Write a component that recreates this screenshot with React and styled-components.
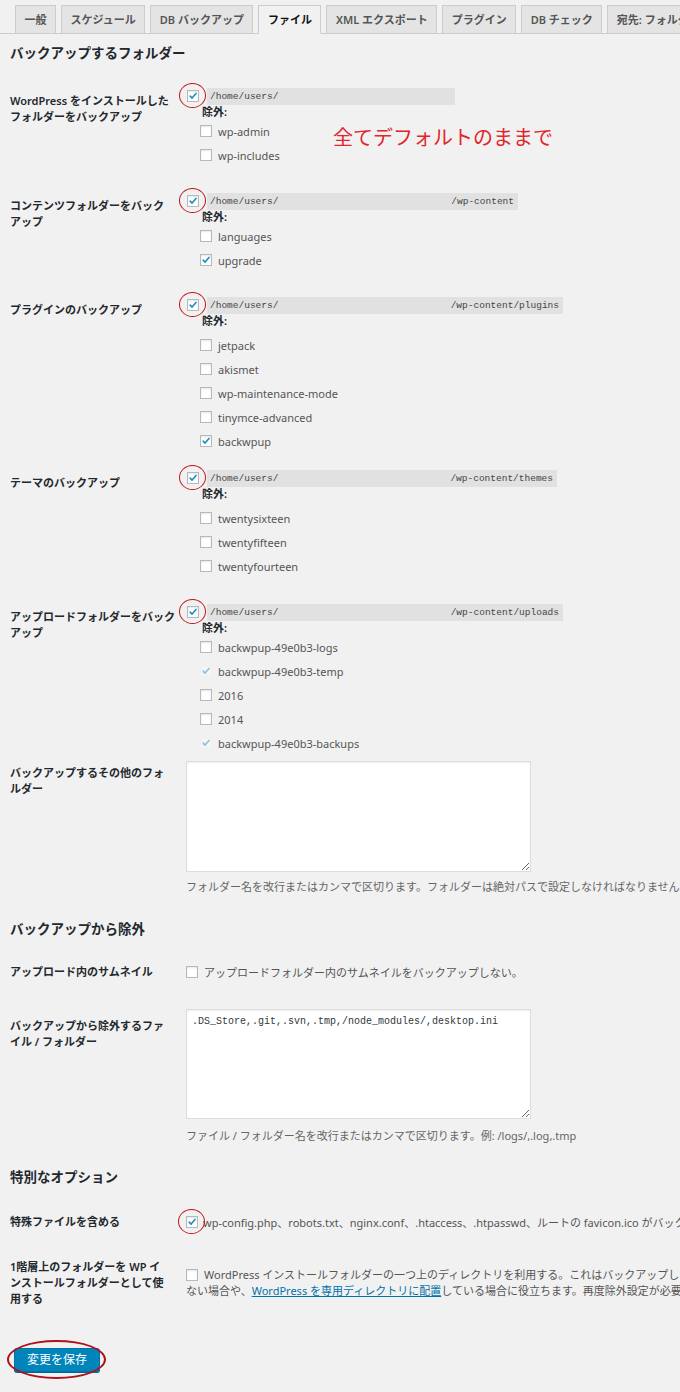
import styled, { createGlobalStyle, css } from "styled-components";

const GlobalStyle = createGlobalStyle`
    html, body {
        margin: 0;
        padding: 0;
        background: #f1f1f1;
        overflow-x: hidden;
    }
    body {
        font-family: "Noto Sans", "Noto Sans CJK JP", sans-serif;
        font-size: 11px;
        color: #444;
    }
`;

const tabs = ["一般", "スケジュール", "DB バックアップ", "ファイル", "XML エクスポート", "プラグイン", "DB チェック", "宛先: フォルダー"];

const folderRows = [
    {
        label: ["WordPress をインストールした", "フォルダーをバックアップ"],
        pt: 25, width: 248, tail: "", gap: 0, note: true,
        items: [["wp-admin"], ["wp-includes"]],
    },
    {
        label: ["コンテンツフォルダーをバック", "アップ"],
        pt: 25, width: 311, tail: "/wp-content", gap: 0,
        items: [["languages"], ["upgrade", "on"]],
    },
    {
        label: ["プラグインのバックアップ"],
        pt: 24, width: 356, tail: "/wp-content/plugins", gap: 5,
        items: [["jetpack"], ["akismet"], ["wp-maintenance-mode"], ["tinymce-advanced"], ["backwpup", "on"]],
    },
    {
        label: ["テーマのバックアップ"],
        pt: 16, width: 350, tail: "/wp-content/themes", gap: 5,
        items: [["twentysixteen"], ["twentyfifteen"], ["twentyfourteen"]],
    },
    {
        label: ["アップロードフォルダーをバック", "アップ"],
        pt: 25, width: 356, tail: "/wp-content/uploads", gap: 0,
        items: [["backwpup-49e0b3-logs"], ["backwpup-49e0b3-temp", "faded"], ["2016"], ["2014"], ["backwpup-49e0b3-backups", "faded"]],
    },
];

const CheckBox = ({ checked, faded, circled, inline }) => (
    <SBox $faded={faded} $circled={circled} $inline={inline}>
        {(checked || faded) && (
            <svg width="12" height="12" viewBox="0 0 12 12">
                <path d="M2.6 6.1 L4.9 8.5 L9.6 2.9" fill="none" stroke={faded ? "#86c1de" : "#1e8cbe"} strokeWidth="1.9" strokeLinecap="round" strokeLinejoin="round" />
            </svg>
        )}
    </SBox>
);

const Lines = ({ lines }) => lines.map((l, i) => <div key={i}>{l}</div>);

export default function App() {
    return (
        <>
            <GlobalStyle />
            <STabBar>
                {tabs.map((t) => (
                    <STab key={t} $active={t === "ファイル"}>{t}</STab>
                ))}
            </STabBar>

            <SH2 $mt={10}>バックアップするフォルダー</SH2>
            {folderRows.map((r, i) => (
                <SRow key={i} $pt={r.pt}>
                    <SLabel><Lines lines={r.label} /></SLabel>
                    <SField>
                        <SPathLine>
                            <CheckBox checked circled />
                            <SPathBar $w={r.width}>
                                <span>/home/users/</span>
                                <span>{r.tail}</span>
                            </SPathBar>
                        </SPathLine>
                        <SExclude>除外:</SExclude>
                        <SItemList $gap={r.gap}>
                            {r.items.map(([name, state]) => (
                                <SItem key={name}>
                                    <CheckBox checked={state === "on"} faded={state === "faded"} />
                                    {name}
                                </SItem>
                            ))}
                        </SItemList>
                        {r.note && <SNote>全てデフォルトのままで</SNote>}
                    </SField>
                </SRow>
            ))}
            <SRow $pt={6}>
                <SLabel $pt={4}><Lines lines={["バックアップするその他のフォ", "ルダー"]} /></SLabel>
                <SField>
                    <STextArea $h={111} defaultValue="" />
                    <SDesc $mt={8}>フォルダー名を改行またはカンマで区切ります。フォルダーは絶対パスで設定しなければなりません。</SDesc>
                </SField>
            </SRow>

            <SH2 $mt={26}>バックアップから除外</SH2>
            <SRow $pt={26}>
                <SLabel $pt={0}>アップロード内のサムネイル</SLabel>
                <SInlineField>
                    <CheckBox />
                    <span>アップロードフォルダー内のサムネイルをバックアップしない。</span>
                </SInlineField>
            </SRow>
            <SRow $pt={29}>
                <SLabel $pt={9}><Lines lines={["バックアップから除外するファ", "イル / フォルダー"]} /></SLabel>
                <SField>
                    <STextArea $h={110} defaultValue=".DS_Store,.git,.svn,.tmp,/node_modules/,desktop.ini" />
                    <SDesc $mt={10}>ファイル / フォルダー名を改行またはカンマで区切ります。例: /logs/,.log,.tmp</SDesc>
                </SField>
            </SRow>

            <SH2 $mt={25}>特別なオプション</SH2>
            <SRow $pt={28}>
                <SLabel $pt={0}>特殊ファイルを含める</SLabel>
                <SInlineField $gap={5}>
                    <CheckBox checked circled />
                    <span>wp-config.php、robots.txt、nginx.conf、.htaccess、.htpasswd、ルートの favicon.ico がバックアップに含まれます。</span>
                </SInlineField>
            </SRow>
            <SRow $pt={29}>
                <SLabel $pt={0}><Lines lines={["1階層上のフォルダーを WP イ", "ンストールフォルダーとして使", "用する"]} /></SLabel>
                <SWrapField>
                    <CheckBox inline />
                    WordPress インストールフォルダーの一つ上のディレクトリを利用する。これはバックアップしたいフォルダーが WordPress インストールフォルダー内に
                    <br />
                    ない場合や、<SLink href="#">WordPress を専用ディレクトリに配置</SLink>している場合に役立ちます。再度除外設定が必要になります。
                </SWrapField>
            </SRow>

            <SSubmit>
                <SSaveButton type="button">変更を保存</SSaveButton>
            </SSubmit>
        </>
    );
}

const STabBar = styled.nav`
    display: flex;
    align-items: flex-end;
    gap: 5px;
    padding: 5px 0 0 15px;
    border-bottom: 1px solid #ccc;
    white-space: nowrap;
`;

const STab = styled.span`
    flex-shrink: 0;
    padding: 0 8.5px;
    line-height: 27px;
    font-size: 11px;
    font-weight: 600;
    border: 1px solid #ccc;
    border-bottom: none;
    background: #e4e4e4;
    color: #555;
    ${(p) => p.$active && css`
        background: #f1f1f1;
        color: #111;
        border-bottom: 1px solid #f1f1f1;
        margin-bottom: -1px;
    `}
`;

const SH2 = styled.h2`
    margin: ${(p) => p.$mt}px 0 0 10px;
    font-size: 13.5px;
    line-height: 18px;
    font-weight: 600;
    color: #23282d;
`;

const SRow = styled.div`
    display: grid;
    grid-template-columns: 186px 1fr;
    padding-top: ${(p) => p.$pt}px;
`;

const SLabel = styled.div`
    padding: ${(p) => p.$pt ?? 6}px 0 0 10px;
    font-weight: 600;
    line-height: 16px;
    color: #23282d;
    white-space: nowrap;
`;

const SField = styled.div`
    position: relative;
`;

const SPathLine = styled.div`
    display: flex;
    align-items: center;
    height: 18px;
    padding-left: 1px;
`;

const SBox = styled.span`
    position: relative;
    flex-shrink: 0;
    display: inline-flex;
    align-items: center;
    justify-content: center;
    width: 12px;
    height: 12px;
    box-sizing: border-box;
    border: 1px solid ${(p) => (p.$faded ? "#efefef" : "#b4b9be")};
    background: ${(p) => (p.$faded ? "#f4f4f4" : "#fff")};
    box-shadow: ${(p) => (p.$faded ? "none" : "inset 0 1px 2px rgba(0,0,0,0.1)")};
    ${(p) => p.$inline && css`
        vertical-align: -2px;
        margin-right: 6px;
    `}
    ${(p) => p.$circled && css`
        &::after {
            content: "";
            position: absolute;
            left: -9px;
            right: -8px;
            top: -8px;
            bottom: -7px;
            border: 1.5px solid #c0161d;
            border-radius: 50%;
        }
    `}
`;

const SPathBar = styled.code`
    display: flex;
    justify-content: space-between;
    box-sizing: border-box;
    width: ${(p) => p.$w}px;
    height: 17px;
    line-height: 17px;
    margin-left: 8px;
    padding: 0 4px 0 3px;
    background: #e1e1e1;
    font-family: "Liberation Mono", "DejaVu Sans Mono", monospace;
    font-size: 9.5px;
    color: #444;
`;

const SExclude = styled.div`
    margin-left: 16px;
    line-height: 14px;
    font-weight: 600;
    color: #23282d;
`;

const SItemList = styled.div`
    margin-left: 14px;
    padding-top: ${(p) => p.$gap}px;
`;

const SItem = styled.div`
    display: flex;
    align-items: center;
    gap: 6px;
    height: 24px;
    color: #555;
`;

const SNote = styled.span`
    position: absolute;
    left: 147px;
    top: 38px;
    font-family: "Noto Sans CJK JP", sans-serif;
    font-size: 20px;
    line-height: 24px;
    color: #e0252b;
    white-space: nowrap;
`;

const STextArea = styled.textarea`
    display: block;
    box-sizing: border-box;
    width: 345px;
    height: ${(p) => p.$h}px;
    margin: 0;
    padding: 5px;
    background: #fff;
    border: 1px solid #ddd;
    border-radius: 0;
    box-shadow: inset 0 1px 2px rgba(0, 0, 0, 0.07);
    font-family: "Liberation Mono", "DejaVu Sans Mono", monospace;
    font-size: 10px;
    line-height: 14px;
    color: #32373c;
    resize: both;
    outline: none;
`;

const SDesc = styled.p`
    margin: ${(p) => p.$mt}px 0 0;
    line-height: 14px;
    color: #666;
    white-space: nowrap;
`;

const SInlineField = styled.div`
    display: flex;
    align-items: center;
    gap: ${(p) => p.$gap ?? 6}px;
    height: 16px;
    color: #555;
    white-space: nowrap;
`;

const SWrapField = styled.div`
    padding-top: 8px;
    line-height: 16px;
    color: #555;
    white-space: nowrap;
`;

const SLink = styled.a`
    color: #0073aa;
    text-decoration: underline;
`;

const SSubmit = styled.div`
    padding: 41px 0 20px 14px;
`;

const SSaveButton = styled.button`
    position: relative;
    height: 24px;
    padding: 0 12px;
    background: #0085ba;
    border: 1px solid #0073aa;
    border-radius: 3px;
    box-shadow: 0 1px 0 #006799;
    color: #fff;
    font-family: "Noto Sans", "Noto Sans CJK JP", sans-serif;
    font-size: 12px;
    line-height: 22px;
    cursor: pointer;
    &::after {
        content: "";
        position: absolute;
        left: -8px;
        right: -7px;
        top: -9px;
        bottom: -8px;
        border: 2px solid #b0101a;
        border-radius: 50%;
    }
`;
